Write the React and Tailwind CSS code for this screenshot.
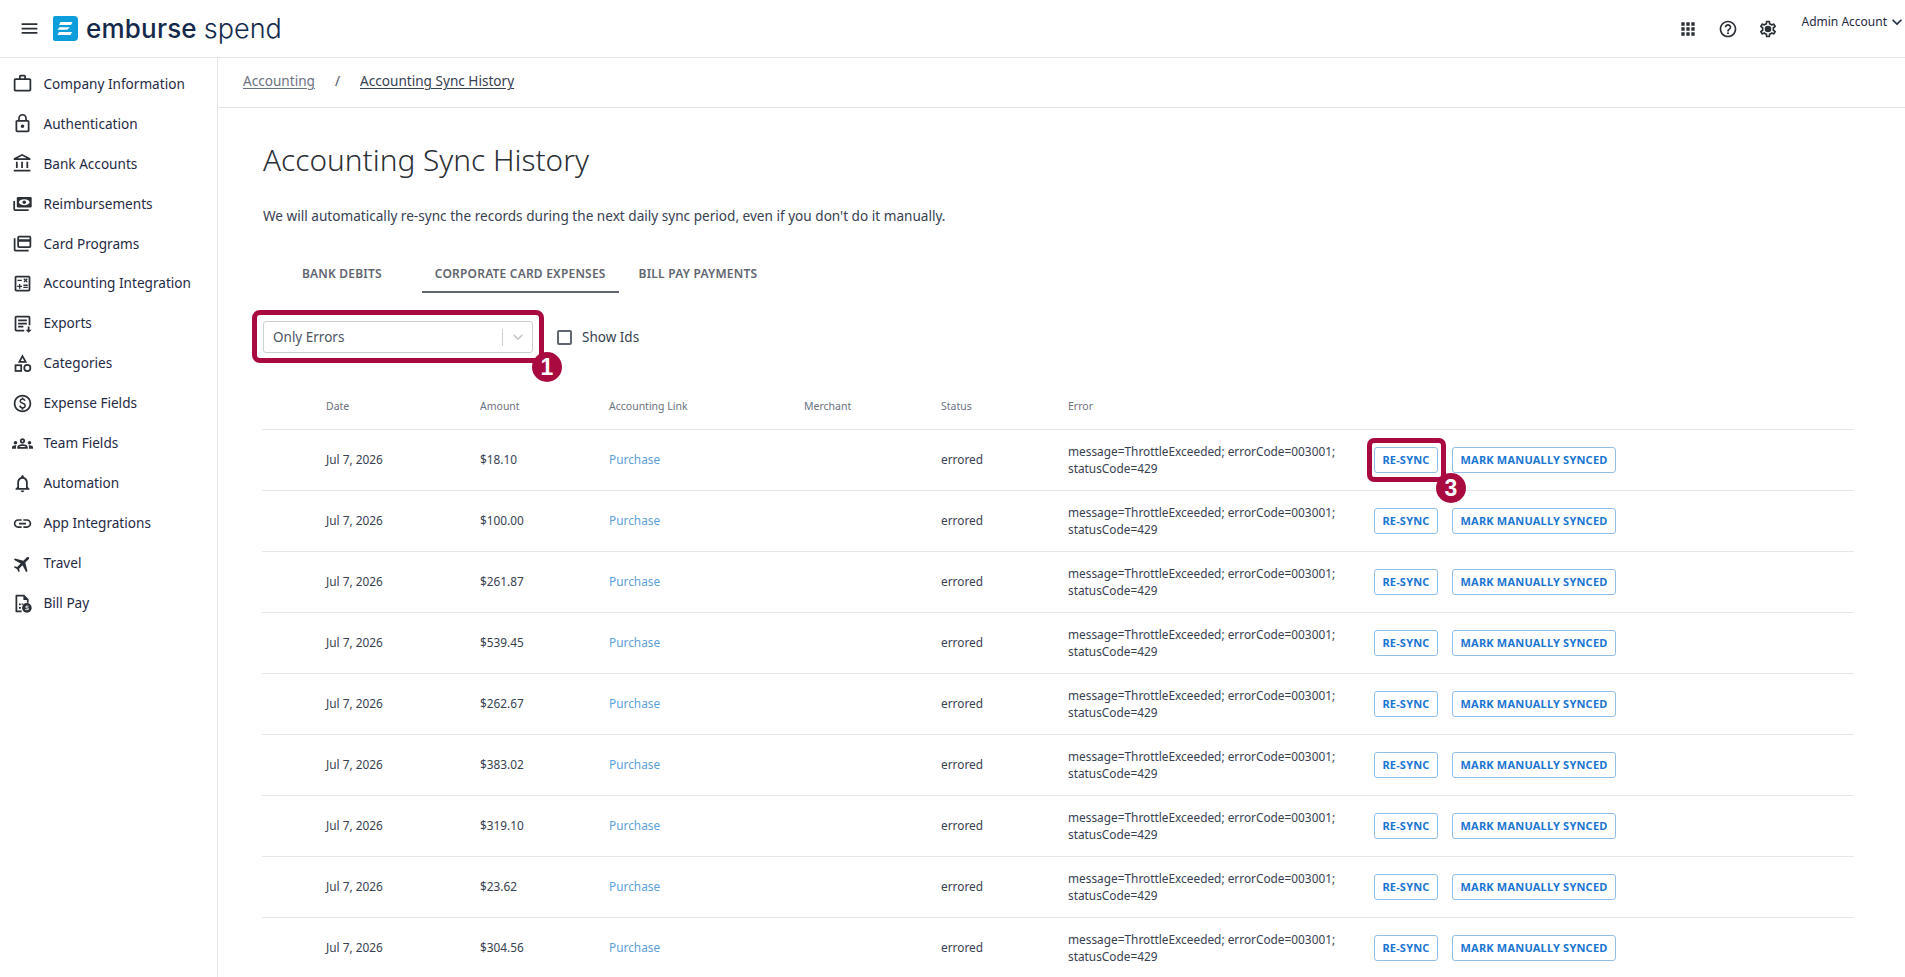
import React from "react";
import {
  MdMenu,
  MdApps,
  MdHelpOutline,
  MdKeyboardArrowDown,
  MdOutlineWorkOutline,
  MdLockOutline,
  MdOutlineAccountBalance,
  MdOutlineCalculate,
  MdOutlinePaid,
  MdOutlineGroups,
  MdOutlineNotifications,
  MdLink,
  MdLocalAirport,
} from "react-icons/md";

const GearIcon = (props) => (
  <svg viewBox="0 0 24 24" fill="currentColor" {...props}>
    <path d="M19.43 12.98c.04-.32.07-.64.07-.98 0-.34-.03-.66-.07-.98l2.11-1.65c.19-.15.24-.42.12-.64l-2-3.46a.5.5 0 0 0-.61-.22l-2.49 1c-.52-.4-1.08-.73-1.69-.98l-.38-2.65A.488.488 0 0 0 14 2h-4c-.25 0-.46.18-.49.42l-.38 2.65c-.61.25-1.17.59-1.69.98l-2.49-1a.566.566 0 0 0-.18-.03c-.17 0-.34.09-.43.25l-2 3.46c-.13.22-.07.49.12.64l2.11 1.65c-.04.32-.07.65-.07.98 0 .33.03.66.07.98l-2.11 1.65c-.19.15-.24.42-.12.64l2 3.46a.5.5 0 0 0 .61.22l2.49-1c.52.4 1.08.73 1.69.98l.38 2.65c.03.24.24.42.49.42h4c.25 0 .46-.18.49-.42l.38-2.65c.61-.25 1.17-.59 1.69-.98l2.49 1c.06.02.12.03.18.03.17 0 .34-.09.43-.25l2-3.46c.12-.22.07-.49-.12-.64l-2.11-1.65zm-1.98-1.71c.04.31.05.52.05.73 0 .21-.02.43-.05.73l-.14 1.13.89.7 1.08.84-.7 1.21-1.27-.51-1.04-.42-.9.68c-.43.32-.84.56-1.25.73l-1.06.43-.16 1.13-.2 1.35h-1.4l-.19-1.35-.16-1.13-1.06-.43c-.43-.18-.83-.41-1.23-.71l-.91-.7-1.06.43-1.27.51-.7-1.21 1.08-.84.89-.7-.14-1.13c-.03-.31-.05-.54-.05-.74s.02-.43.05-.73l.14-1.13-.89-.7-1.08-.84.7-1.21 1.27.51 1.04.42.9-.68c.43-.32.84-.56 1.25-.73l1.06-.43.16-1.13.2-1.35h1.39l.19 1.35.16 1.13 1.06.43c.43.18.83.41 1.23.71l.91.7 1.06-.43 1.27-.51.7 1.21-1.07.85-.89.7.14 1.13z" />
    <circle cx="12" cy="12" r="4" />
  </svg>
);

const MoneyIcon = (props) => (
  <svg viewBox="0 0 24 24" fill="currentColor" {...props}>
    <path d="M1.500 9h2v9.500H19v2H3.500a2 2 0 0 1-2-2z" />
    <rect x="5.500" y="4.500" width="17" height="12" rx="1.500" />
    <ellipse cx="14" cy="10.500" rx="6" ry="3.500" fill="#fff" />
    <circle cx="14" cy="10.500" r="2" />
  </svg>
);

const CardsIcon = (props) => (
  <svg viewBox="0 0 24 24" fill="currentColor" {...props}>
    <path d="M4 6H2v13a2 2 0 0 0 2 2h15v-2H4V6z" />
    <path d="M20 3H8a2 2 0 0 0-2 2v10a2 2 0 0 0 2 2h12a2 2 0 0 0 2-2V5a2 2 0 0 0-2-2zm0 12H8v-5h12v5zm0-8H8V5h12v2z" />
  </svg>
);

const ExportsIcon = (props) => (
  <svg viewBox="0 0 24 24" fill="currentColor" {...props}>
    <path d="M5 3h14a2 2 0 0 1 2 2v9h-2V5H5v14h9v2H5a2 2 0 0 1-2-2V5a2 2 0 0 1 2-2z" />
    <path d="M7 7.500h10v2H7zM7 11h10v2H7zM7 14.500h6v2H7z" />
    <path d="M18 15.500h2V19h2.500L19 22.500 15.500 19H18z" />
  </svg>
);

const CategoriesIcon = (props) => (
  <svg viewBox="0 0 24 24" fill="none" stroke="currentColor" strokeWidth="2" {...props}>
    <path d="M12 3.500 15.600 10H8.400z" />
    <rect x="4" y="14" width="6.500" height="6.500" />
    <circle cx="17.500" cy="17.200" r="3.500" />
  </svg>
);

const BillIcon = (props) => (
  <svg viewBox="0 0 24 24" fill="currentColor" {...props}>
    <path d="M5 2h9l5 5v4h-2V8h-4V4H6v16h5v2H5a1 1 0 0 1-1-1V3a1 1 0 0 1 1-1z" />
    <path d="M8 12h2v2H8zM8 16h2v2H8zM11 12h2v1.500h-2z" />
    <circle cx="17" cy="17" r="5.500" />
    <path d="M19 15h-3v2h2.500v2H15" stroke="#fff" strokeWidth="1" fill="none" />
  </svg>
);

const LogoMark = () => (
  <svg viewBox="0 0 25 25" className="w-[25px] h-[25px] shrink-0">
    <path d="M2 0h19a4 4 0 0 1 4 4v17a4 4 0 0 1-4 4H2a2 2 0 0 1-2-2V2a2 2 0 0 1 2-2z" fill="#0d9ddb" />
    <path d="M7.500 6h12l-1.500 3H6zM6.500 11.200h10.500l-3 2.600H4.500zM6 16h13l-1.500 3H4.500z" fill="#fff" />
  </svg>
);

const navItems = [
  ["Company Information", MdOutlineWorkOutline, ""],
  ["Authentication", MdLockOutline, ""],
  ["Bank Accounts", MdOutlineAccountBalance, ""],
  ["Reimbursements", MoneyIcon, ""],
  ["Card Programs", CardsIcon, ""],
  ["Accounting Integration", MdOutlineCalculate, ""],
  ["Exports", ExportsIcon, ""],
  ["Categories", CategoriesIcon, ""],
  ["Expense Fields", MdOutlinePaid, ""],
  ["Team Fields", MdOutlineGroups, ""],
  ["Automation", MdOutlineNotifications, ""],
  ["App Integrations", MdLink, ""],
  ["Travel", MdLocalAirport, "rotate-45"],
  ["Bill Pay", BillIcon, ""],
];

const amounts = ["$18.10", "$100.00", "$261.87", "$539.45", "$262.67", "$383.02", "$319.10", "$23.62", "$304.56"];

const Marker = ({ n, className }) => (
  <span
    className={`absolute w-[30px] h-[30px] rounded-full bg-[#a90a3f] text-white flex items-center justify-center text-[23px] font-bold font-['Liberation_Sans'] z-10 ${className}`}
  >
    {n}
  </span>
);

const gridCols = "grid grid-cols-[154px_129px_195px_137px_127px_306px_1fr] pl-[64px] items-center";

const Row = ({ amount, first }) => (
  <div className={`${gridCols} h-[61px] border-t border-[#e5e7e9] text-[11.85px] text-[#374151]`}>
    <span>Jul 7, 2026</span>
    <span>{amount}</span>
    <span className="text-[#5d9fd8]">Purchase</span>
    <span></span>
    <span>errored</span>
    <span className="leading-[17px]">
      message=ThrottleExceeded; errorCode=003001;
      <br />
      statusCode=429
    </span>
    <div className="flex gap-[14px]">
      <div className="relative">
        <button className="h-[26px] w-[64px] rounded-[3px] border border-[#90bfea] text-[#1a76d2] text-[11px] font-bold tracking-[0.2px] bg-white">
          RE-SYNC
        </button>
        {first && (
          <>
            <span className="absolute left-[-7px] top-[-9px] w-[79px] h-[44px] rounded-[7px] border-[5px] border-[#a90a3f]"></span>
            <Marker n="3" className="left-[62px] top-[26px]" />
          </>
        )}
      </div>
      <button className="h-[26px] w-[164px] rounded-[3px] border border-[#90bfea] text-[#1a76d2] text-[11px] font-bold tracking-[0.2px] bg-white">
        MARK MANUALLY SYNCED
      </button>
    </div>
  </div>
);

export default function App() {
  return (
    <div className="h-[977px] overflow-hidden bg-white font-['Noto_Sans',sans-serif] text-[#1f2a44] flex flex-col">
      {/* Top bar */}
      <header className="h-[58px] shrink-0 border-b border-[#e2e4e6] flex items-center">
        <MdMenu className="w-[21px] h-[21px] ml-[19px] text-[#2b2f36]" />
        <div className="flex items-center ml-[13px]">
          <LogoMark />
          <span className="ml-[8px] text-[26px] leading-none tracking-[0.2px] text-[#14294b] font-['Inter',sans-serif] font-medium">
            emburse
          </span>
          <span className="ml-[7px] text-[27px] leading-none text-[#14294b] font-['Inter',sans-serif] font-light">
            spend
          </span>
        </div>
        <div className="ml-auto h-full flex items-center text-[#2b2f36]">
          <MdApps className="w-[20px] h-[20px]" />
          <MdHelpOutline className="w-[20px] h-[20px] ml-[20px]" />
          <GearIcon className="w-[20px] h-[20px] ml-[20px]" />
          <div className="ml-[23px] mr-[-2px] mt-[12px] flex items-center self-start text-[12px] leading-[20px] text-[#1f2a44]">
            Admin Account
            <MdKeyboardArrowDown className="w-[20px] h-[20px]" />
          </div>
        </div>
      </header>

      <div className="flex flex-1 min-h-0">
        {/* Sidebar */}
        <aside className="w-[218px] shrink-0 border-r border-[#e2e4e6] pt-[6px]">
          {navItems.map(([label, Icon, extra]) => (
            <div key={label} className="h-[39.95px] flex items-center text-[13.6px]">
              <Icon className={`w-[21px] h-[21px] ml-[12px] text-[#2b2f36] shrink-0 ${extra}`} />
              <span className="ml-[10.5px]">{label}</span>
            </div>
          ))}
        </aside>

        <main className="flex-1 min-w-0">
          {/* Breadcrumb */}
          <div className="h-[50px] border-b border-[#e2e4e6] flex items-center text-[13.6px] pl-[25px] pb-[2px]">
            <span className="text-[#6b7280] underline underline-offset-2">Accounting</span>
            <span className="ml-[20px] text-[#4b5563]">/</span>
            <span className="ml-[20px] text-[#374151] underline underline-offset-2">Accounting Sync History</span>
          </div>

          <div className="pl-[44px] pr-[51px]">
            <h1 className="ml-[1px] mt-[31px] text-[29.8px] leading-[42px] font-light text-[#2b2f36]">Accounting Sync History</h1>
            <p className="ml-[1px] mt-[25px] text-[13.6px] leading-[20px] text-[#374151]">
              We will automatically re-sync the records during the next daily sync period, even if you don't do it manually.
            </p>

            {/* Tabs */}
            <div className="mt-[24px] flex h-[43px] text-[12px] font-semibold tracking-[0.2px] text-[#5f6670]">
              <span className="ml-[27px] px-[13px] leading-[47px]">BANK DEBITS</span>
              <span className="ml-[27px] px-[13px] leading-[47px] border-b-2 border-[#5f6670]">CORPORATE CARD EXPENSES</span>
              <span className="ml-[7px] px-[13px] leading-[47px]">BILL PAY PAYMENTS</span>
            </div>

            {/* Filters */}
            <div className="mt-[28px] flex items-center h-[32px]">
              <div className="relative w-[270px] h-[32px] ml-[1px]">
                <div className="h-full rounded-[3px] border border-[#cbced2] flex items-center pl-[9px] text-[13.5px] text-[#4b5563]">
                  Only Errors
                  <span className="ml-auto w-px h-[17px] bg-[#cbced2]"></span>
                  <MdKeyboardArrowDown className="w-[20px] h-[20px] ml-[5px] mr-[4px] text-[#c4c7cb]" />
                </div>
                <span className="absolute left-[-11px] top-[-11px] w-[292px] h-[53px] rounded-[8px] border-[5px] border-[#a90a3f]"></span>
                <Marker n="1" className="left-[269px] top-[31px]" />
              </div>
              <span className="ml-[24px] w-[15px] h-[15px] rounded-[2px] border-2 border-[#5f6670]"></span>
              <span className="ml-[10px] text-[13.5px] text-[#374151]">Show Ids</span>
            </div>

            {/* Table */}
            <div className="mt-[27px]">
              <div className={`${gridCols} h-[49px] pt-[4px] text-[10.5px] text-[#6b7280]`}>
                <span>Date</span>
                <span>Amount</span>
                <span>Accounting Link</span>
                <span>Merchant</span>
                <span>Status</span>
                <span>Error</span>
                <span></span>
              </div>
              {amounts.map((a, i) => (
                <Row key={i} amount={a} first={i === 0} />
              ))}
            </div>
          </div>
        </main>
      </div>
    </div>
  );
}
